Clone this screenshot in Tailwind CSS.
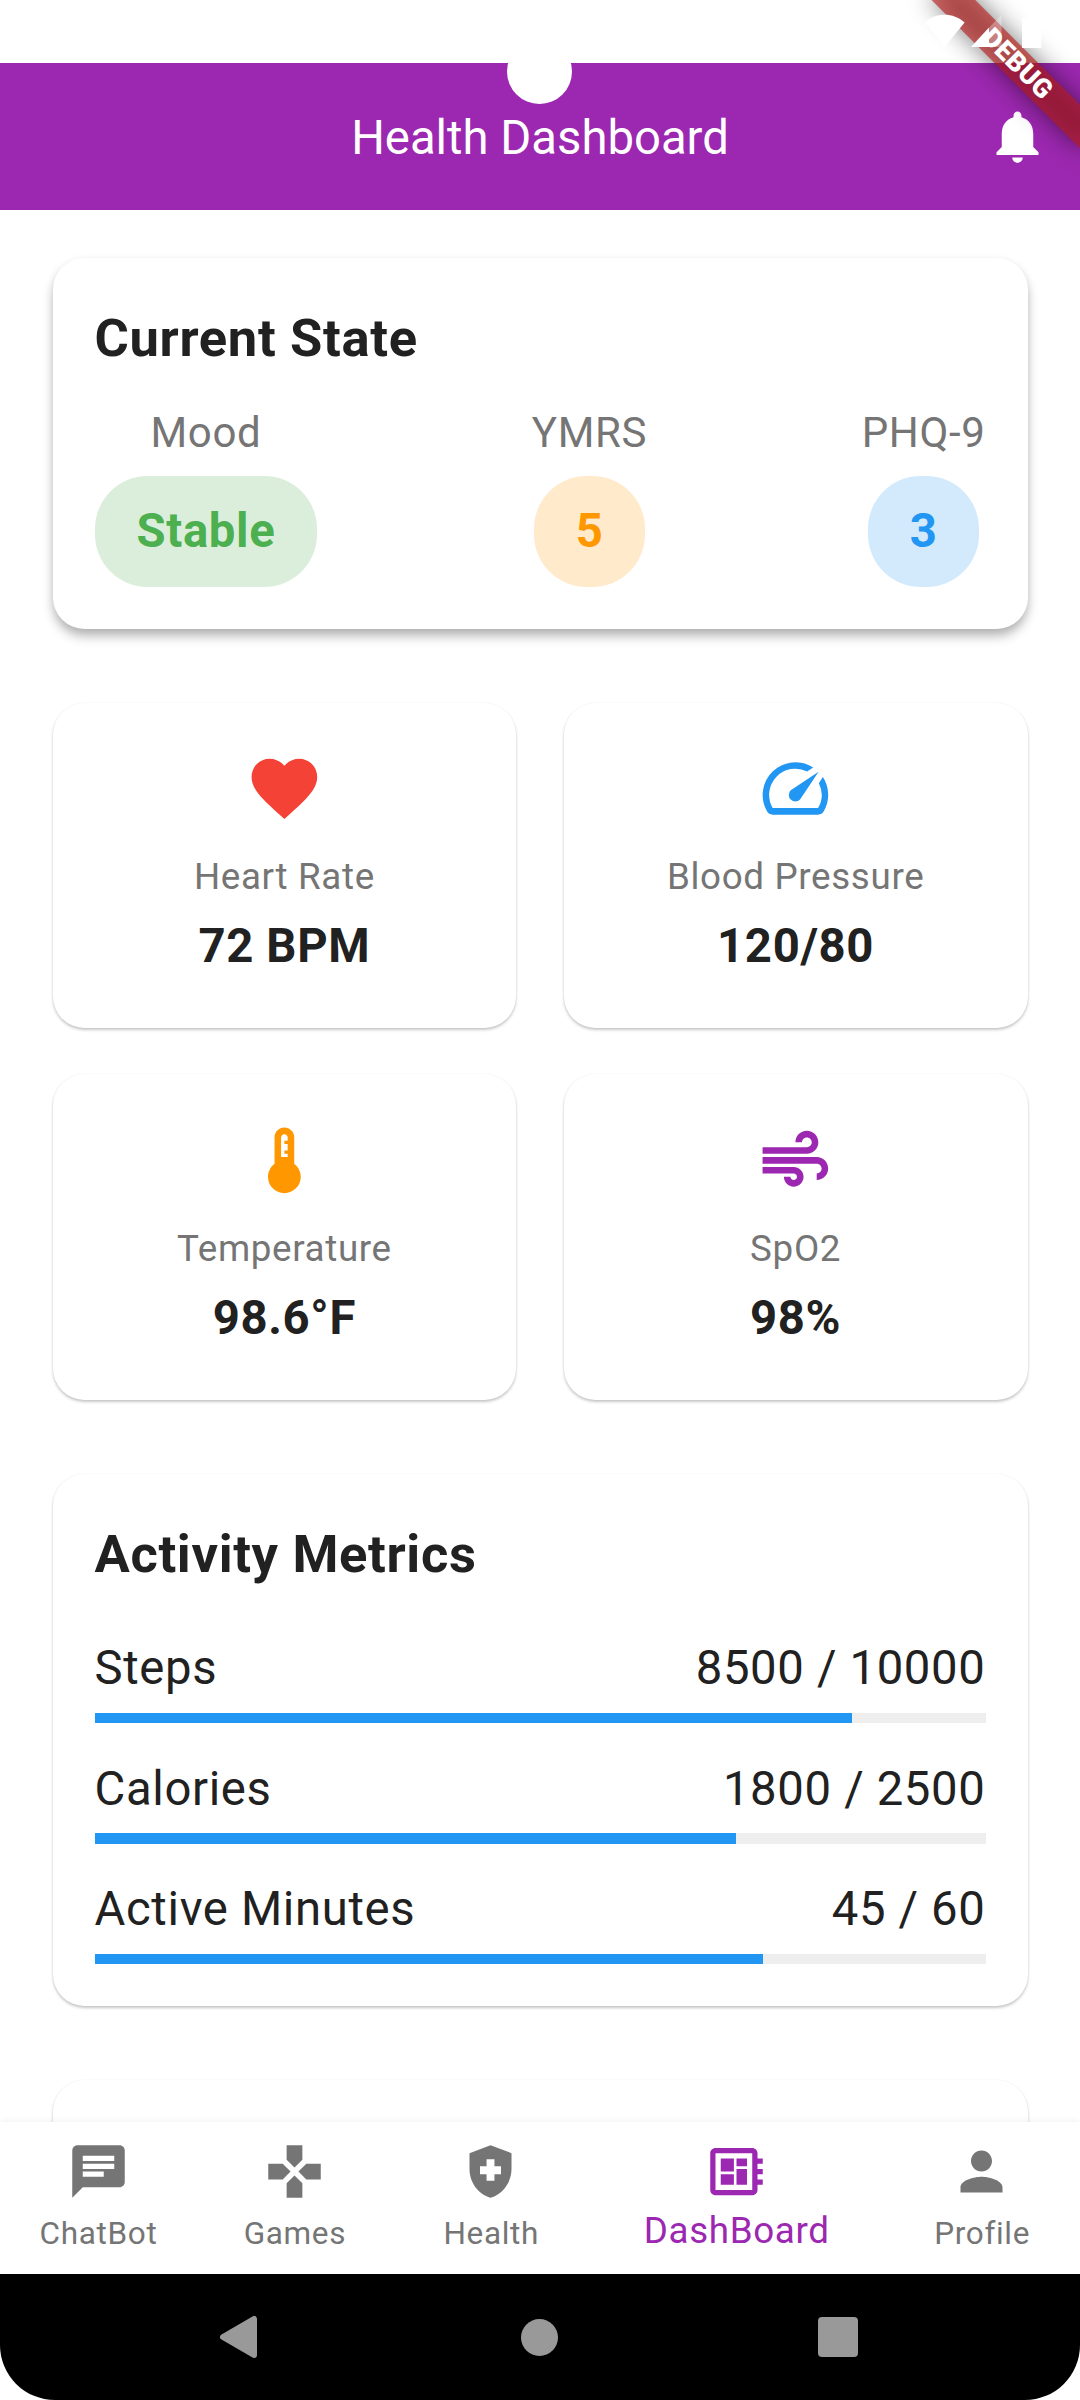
<!DOCTYPE html>
<html lang="en">
<head>
<meta charset="utf-8">
<title>Health Dashboard</title>
<script src="https://cdn.jsdelivr.net/npm/@tailwindcss/browser@4"></script>
</head>
<body class="bg-white">
<div class="relative flex flex-col w-[1080px] h-[2400px] overflow-hidden bg-white font-['Roboto',sans-serif] text-[#212121] tracking-[0.656px]">

  <!-- Status bar space and app bar -->
  <div class="h-[63px] shrink-0"></div>
  <header class="h-[147px] shrink-0 bg-[#9c27b0] text-white grid grid-cols-[1fr_auto_1fr] items-center pr-[31.5px]">
    <span></span>
    <h1 class="text-[47.25px] leading-[56px] tracking-normal pl-[31.5px] pt-[3px]">Health Dashboard</h1>
    <svg class="w-[63px] h-[63px] justify-self-end" viewBox="0 0 24 24" fill="currentColor"><path d="M12 22c1.1 0 2-.9 2-2h-4c0 1.1.9 2 2 2zm6-6v-5c0-3.07-1.63-5.64-4.5-6.32V4c0-.83-.67-1.5-1.5-1.5s-1.5.67-1.5 1.5v.68C7.64 5.36 6 7.92 6 11v5l-2 2v1h16v-1l-2-2z"/></svg>
  </header>

  <!-- Scrolling content -->
  <main class="flex-1 min-h-0 overflow-hidden px-[52.5px] pt-[48.3px] flex flex-col">

    <section class="shrink-0 h-[370.4px] rounded-[31.5px] bg-white px-[42px] pt-[41.7px] shadow-[0_8px_12px_-1px_rgba(0,0,0,0.28),0_2px_8px_rgba(0,0,0,0.07)]">
      <h2 class="text-[52.5px] leading-[76px] font-bold">Current State</h2>
      <div class="mt-[26px] flex justify-between">
        <div class="flex flex-col items-center">
          <span class="text-[42px] leading-[61px] text-[#757575]">Mood</span>
          <span class="mt-[13px] h-[110.6px] pt-[21px] px-[42px] rounded-[52.5px] bg-[#dbeedb] text-[#4caf50] text-[47.25px] leading-[68px] font-bold">Stable</span>
        </div>
        <div class="flex flex-col items-center">
          <span class="text-[42px] leading-[61px] text-[#757575]">YMRS</span>
          <span class="mt-[13px] h-[110.6px] pt-[21px] px-[42px] rounded-[52.5px] bg-[#ffeacc] text-[#ff9800] text-[47.25px] leading-[68px] font-bold">5</span>
        </div>
        <div class="flex flex-col items-center">
          <span class="text-[42px] leading-[61px] text-[#757575]">PHQ-9</span>
          <span class="mt-[13px] h-[110.6px] pt-[21px] px-[42px] rounded-[52.5px] bg-[#d3eafd] text-[#2196f3] text-[47.25px] leading-[68px] font-bold">3</span>
        </div>
      </div>
    </section>

    <div class="shrink-0 mt-[74px] grid grid-cols-2 gap-x-[47.5px] gap-y-[46.4px] auto-rows-[325.4px]">
      <section class="rounded-[31.5px] bg-white pt-[46.5px] flex flex-col items-center shadow-[0_2px_3px_rgba(0,0,0,0.22),0_0_2px_rgba(0,0,0,0.05)]">
        <svg class="w-[78.75px] h-[78.75px] text-[#f44336]" viewBox="0 0 24 24" fill="currentColor"><path d="M12 21.35l-1.45-1.32C5.4 15.36 2 12.28 2 8.5 2 5.42 4.42 3 7.5 3c1.74 0 3.41.81 4.5 2.09C13.09 3.81 14.76 3 16.5 3 19.58 3 22 5.42 22 8.5c0 3.78-3.4 6.86-8.55 11.54L12 21.35z"/></svg>
        <span class="mt-[22.75px] text-[36.75px] leading-[52px] text-[#757575]">Heart Rate</span>
        <span class="mt-[9.5px] text-[47.25px] leading-[68px] font-bold">72 BPM</span>
      </section>
      <section class="rounded-[31.5px] bg-white pt-[46.5px] flex flex-col items-center shadow-[0_2px_3px_rgba(0,0,0,0.22),0_0_2px_rgba(0,0,0,0.05)]">
        <svg class="w-[78.75px] h-[78.75px] text-[#2196f3]" viewBox="0 0 24 24" fill="currentColor"><path d="M20.38 8.57l-1.23 1.85a8 8 0 0 1-.22 7.58H5.07A8 8 0 0 1 15.58 6.85l1.85-1.23A10 10 0 0 0 3.35 19a2 2 0 0 0 1.72 1h13.85a2 2 0 0 0 1.74-1 10 10 0 0 0-.27-10.44zm-9.79 6.84a2 2 0 0 0 2.83 0l5.66-8.49-8.49 5.66a2 2 0 0 0 0 2.83z"/></svg>
        <span class="mt-[22.75px] text-[36.75px] leading-[52px] text-[#757575]">Blood Pressure</span>
        <span class="mt-[9.5px] text-[47.25px] leading-[68px] font-bold">120/80</span>
      </section>
      <section class="rounded-[31.5px] bg-white pt-[46.5px] flex flex-col items-center shadow-[0_2px_3px_rgba(0,0,0,0.22),0_0_2px_rgba(0,0,0,0.05)]">
        <svg class="w-[78.75px] h-[78.75px] text-[#ff9800]" viewBox="0 0 24 24" fill="currentColor"><path d="M15 13V5c0-1.66-1.34-3-3-3S9 3.34 9 5v8c-1.21.91-2 2.37-2 4 0 2.76 2.24 5 5 5s5-2.24 5-5c0-1.63-.79-3.09-2-4zm-4-8c0-.55.45-1 1-1s1 .45 1 1v1h-1v1h1v2h-1v1h1v1h-2V5z"/></svg>
        <span class="mt-[23.4px] text-[36.75px] leading-[52px] text-[#757575]">Temperature</span>
        <span class="mt-[9px] text-[47.25px] leading-[68px] font-bold">98.6°F</span>
      </section>
      <section class="rounded-[31.5px] bg-white pt-[46.5px] flex flex-col items-center shadow-[0_2px_3px_rgba(0,0,0,0.22),0_0_2px_rgba(0,0,0,0.05)]">
        <svg class="w-[78.75px] h-[78.75px] text-[#9c27b0]" viewBox="0 0 24 24" fill="currentColor"><path d="M14.5 17c0 1.65-1.35 3-3 3s-3-1.35-3-3h2c0 .55.45 1 1 1s1-.45 1-1-.45-1-1-1H2v-2h9.5c1.65 0 3 1.35 3 3zM19 6.5C19 4.57 17.43 3 15.5 3S12 4.57 12 6.5h2c0-.83.67-1.5 1.5-1.5s1.5.67 1.5 1.5S16.33 8 15.5 8H2v2h13.5c1.93 0 3.5-1.57 3.5-3.5zm-.5 4.5H2v2h16.5c.83 0 1.5.67 1.5 1.5s-.67 1.5-1.5 1.5v2c1.93 0 3.5-1.57 3.5-3.5S20.43 11 18.5 11z"/></svg>
        <span class="mt-[23.4px] text-[36.75px] leading-[52px] text-[#757575]">SpO2</span>
        <span class="mt-[9px] text-[47.25px] leading-[68px] font-bold">98%</span>
      </section>
    </div>

    <section class="shrink-0 mt-[73.8px] h-[532.6px] rounded-[31.5px] bg-white px-[42px] pt-[42px] shadow-[0_2px_3px_rgba(0,0,0,0.22),0_0_2px_rgba(0,0,0,0.05)]">
      <h2 class="text-[52.5px] leading-[76px] font-bold">Activity Metrics</h2>
      <div class="mt-[42.4px] flex flex-col gap-[31.5px] text-[47.25px] leading-[68px]">
        <div>
          <div class="flex justify-between"><span>Steps</span><span>8500 / 10000</span></div>
          <div class="mt-[10.5px] h-[10.5px] bg-[#eeeeee]"><div class="h-full bg-[#2196f3]" style="width:85%"></div></div>
        </div>
        <div>
          <div class="flex justify-between"><span>Calories</span><span>1800 / 2500</span></div>
          <div class="mt-[10.5px] h-[10.5px] bg-[#eeeeee]"><div class="h-full bg-[#2196f3]" style="width:72%"></div></div>
        </div>
        <div>
          <div class="flex justify-between"><span>Active Minutes</span><span>45 / 60</span></div>
          <div class="mt-[10.5px] h-[10.5px] bg-[#eeeeee]"><div class="h-full bg-[#2196f3]" style="width:75%"></div></div>
        </div>
      </div>
    </section>

    <section class="shrink-0 mt-[73.4px] h-[200px] rounded-[31.5px] bg-white shadow-[0_2px_3px_rgba(0,0,0,0.22),0_0_2px_rgba(0,0,0,0.05)]"></section>
  </main>

  <!-- Bottom navigation -->
  <nav class="relative z-10 h-[152px] shrink-0 bg-white pt-[18px] flex text-[#757575] text-[31.5px] leading-[37px] shadow-[0_0_7px_rgba(0,0,0,0.08)]">
    <a class="flex-[2] basis-0 flex flex-col items-center">
      <svg class="w-[63px] h-[63px]" viewBox="0 0 24 24" fill="currentColor"><path d="M20 2H4c-1.1 0-1.99.9-1.99 2L2 22l4-4h14c1.1 0 2-.9 2-2V4c0-1.1-.9-2-2-2zM6 9h12v2H6V9zm8 5H6v-2h8v2zm4-6H6V6h12v2z"/></svg>
      <span class="mt-3 pl-[0.656px]">ChatBot</span>
    </a>
    <a class="flex-[2] basis-0 flex flex-col items-center">
      <svg class="w-[63px] h-[63px]" viewBox="0 0 24 24" fill="currentColor"><path d="M15 7.5V2H9v5.5l3 3 3-3zM7.5 9H2v6h5.5l3-3-3-3zM9 16.5V22h6v-5.5l-3-3-3 3zM16.5 9l-3 3 3 3H22V9h-5.5z"/></svg>
      <span class="mt-3 pl-[0.656px]">Games</span>
    </a>
    <a class="flex-[2] basis-0 flex flex-col items-center">
      <svg class="w-[63px] h-[63px]" viewBox="0 0 24 24" fill="currentColor" fill-rule="evenodd"><path d="M12 2L4 5v6.09c0 5.05 3.41 9.76 8 10.91 4.59-1.15 8-5.86 8-10.91V5l-8-3zM10.5 13H8v-3h2.5V7.3h3V10H16v3h-2.5v2.5h-3V13z"/></svg>
      <span class="mt-3 pl-[0.656px]">Health</span>
    </a>
    <a class="flex-[3] basis-0 flex flex-col items-center text-[#9c27b0]">
      <svg class="w-[63px] h-[63px]" viewBox="0 0 24 24" fill="currentColor"><path d="M22 9V7h-2V5c0-1.1-.9-2-2-2H4c-1.1 0-2 .9-2 2v14c0 1.1.9 2 2 2h14c1.1 0 2-.9 2-2v-2h2v-2h-2v-2h2v-2h-2V9h2zm-4 10H4V5h14v14zM6 13h5v4H6zm6-6h4v3h-4zM6 7h5v5H6zm6 4h4v6h-4z"/></svg>
      <span class="mt-[5px] text-[36.75px] leading-[45px] pl-[0.656px]">DashBoard</span>
    </a>
    <a class="flex-[2] basis-0 flex flex-col items-center">
      <svg class="w-[63px] h-[63px]" viewBox="0 0 24 24" fill="currentColor"><path d="M12 12c2.21 0 4-1.79 4-4s-1.79-4-4-4-4 1.79-4 4 1.79 4 4 4zm0 2c-2.67 0-8 1.34-8 4v2h16v-2c0-2.66-5.33-4-8-4z"/></svg>
      <span class="mt-3 pl-[0.656px]">Profile</span>
    </a>
  </nav>

  <!-- System navigation -->
  <div class="relative z-10 h-[126px] shrink-0 bg-white">
    <div class="h-full bg-black rounded-b-[55px] flex items-center pl-[220px]">
      <svg class="w-[37px] h-[42px]" viewBox="0 0 37 42"><path d="M3 21L34 3v36z" fill="#999" stroke="#999" stroke-width="6" stroke-linejoin="round"/></svg>
      <span class="ml-[264px] w-[37px] h-[37px] rounded-full bg-[#999999]"></span>
      <span class="ml-[260px] w-[40px] h-[40px] rounded-[4px] bg-[#999999]"></span>
    </div>
  </div>

  <!-- Camera cutout -->
  <div class="absolute left-[507px] top-[39px] w-[65px] h-[65px] rounded-full bg-white"></div>

  <!-- Debug ribbon -->
  <div class="absolute left-[1080px] top-0 w-0 h-0 origin-top-left rotate-45">
    <div class="absolute left-[-105px] top-[73.5px] w-[210px] h-[31.5px] bg-black/50 blur-[13px]"></div>
    <div class="absolute left-[-105px] top-[73.5px] w-[210px] h-[31.5px] bg-[#b71c1c]/63 text-white text-[26.775px] leading-[31.5px] font-black tracking-[0.3px] text-center pl-[2px]">DEBUG</div>
  </div>

  <!-- Status icons -->
  <svg class="absolute left-[920px] top-[10px] w-[130px] h-[42px]" viewBox="920 10 130 42" fill="#fff">
    <path d="M924.6 22.5C936 12.2 953 12.2 964.6 22.5L944.6 47z"/>
    <path d="M971 47L989 27.5V47z"/>
    <path d="M989 27.5L1001.600 15V47H989z" fill-opacity=".3"/>
    <path d="M1022 18h5v-3h9v3h5.300v30H1022z"/>
  </svg>
</div>
</body>
</html>
